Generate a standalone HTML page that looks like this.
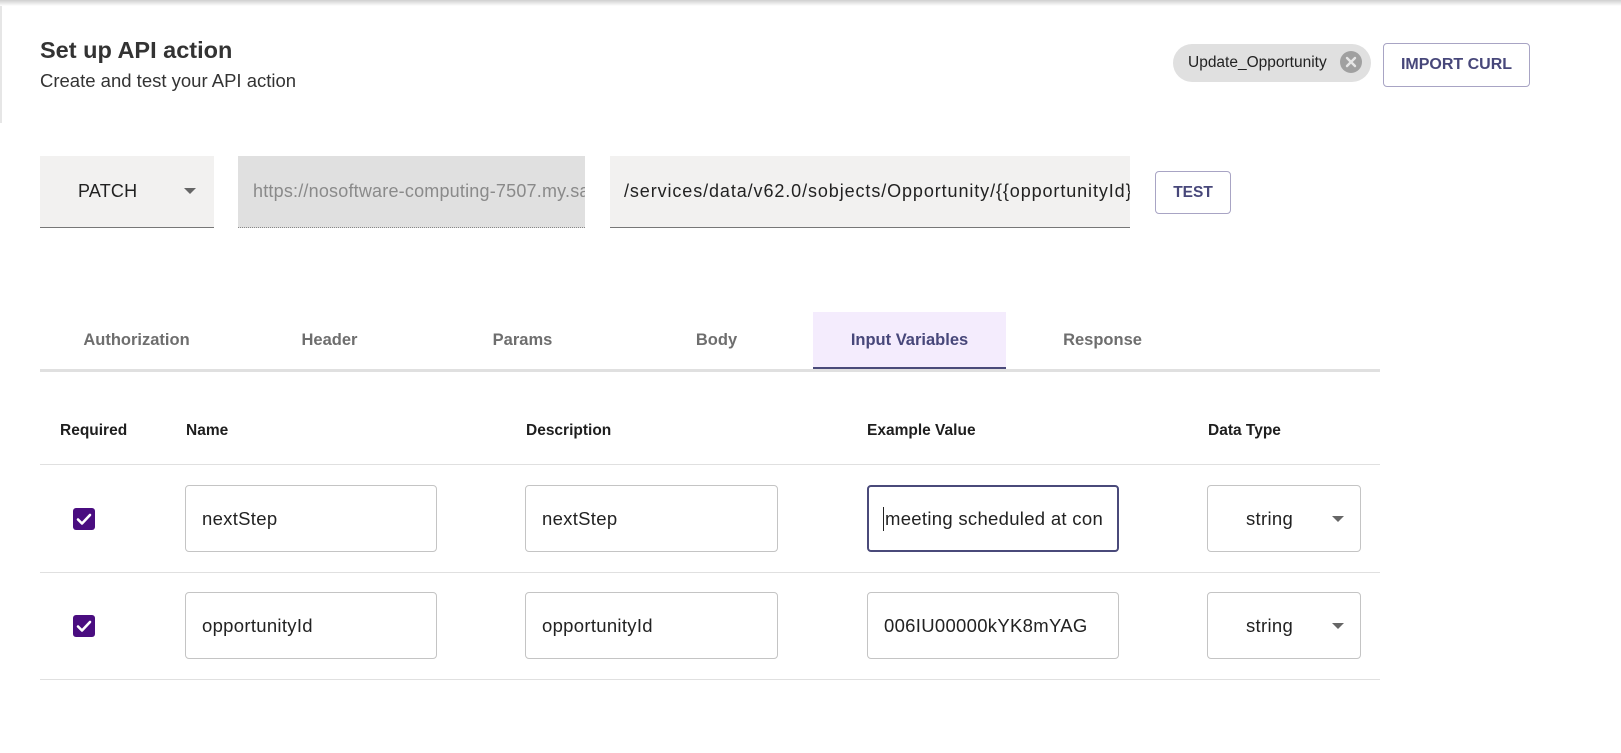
<!DOCTYPE html>
<html><head><meta charset="utf-8"><style>
*{box-sizing:border-box;margin:0;padding:0}
body{width:1621px;height:753px;background:#fff;font-family:"Liberation Sans",sans-serif;position:relative;overflow:hidden;color:#222}
.a{position:absolute}
.topsh{left:0;top:0;width:1621px;height:6px;background:linear-gradient(#cfcfcf,#fff)}
.lft{left:0;top:6px;width:2px;height:117px;background:#e6e6e6}
.t{white-space:nowrap;overflow:hidden}
.btn{border:1px solid #a8a4c4;border-radius:4px;color:#47477a;font-weight:bold;display:flex;align-items:center;justify-content:center;background:#fff}
.fld{display:flex;align-items:center;white-space:nowrap;overflow:hidden;font-size:18px;letter-spacing:0.2px}
.tab{top:312px;height:57px;width:193px;display:flex;align-items:center;justify-content:center;font-size:16.5px;color:#6e6e6e;font-weight:bold}
.th{top:422px;font-size:15.5px;font-weight:bold;color:#1e1e1e}
.hr{left:40px;width:1340px;height:1px;background:#e0e0e0}
.in{border:1px solid #c4c4c4;border-radius:4px;height:67px;display:flex;align-items:center;padding-left:16px;font-size:18.5px;letter-spacing:0.3px;color:#222;white-space:nowrap;overflow:hidden}
.cb{width:22px;height:22px;border-radius:3px;background:#4a0d80}
.arr{width:0;height:0;border-left:6px solid transparent;border-right:6px solid transparent;border-top:6px solid #666}
</style></head><body>
<div class="a topsh"></div><div class="a lft"></div>
<div class="a t" style="left:40px;top:37px;font-size:23.5px;font-weight:bold;color:#333">Set up API action</div>
<div class="a t" style="left:40px;top:70px;font-size:18.5px;color:#333">Create and test your API action</div>

<div class="a" style="left:1173px;top:44px;width:198px;height:38px;border-radius:19px;background:#e0e0e0;display:flex;align-items:center;padding-left:15px;font-size:15.5px;color:#222">Update_Opportunity</div>
<div class="a" style="left:1340px;top:51px;width:22px;height:22px;border-radius:50%;background:#a0a0a0">
<svg width="22" height="22" viewBox="0 0 22 22"><path d="M7 7L15 15M15 7L7 15" stroke="#e6e6e6" stroke-width="2.4" stroke-linecap="round"/></svg></div>
<div class="a btn" style="left:1383px;top:43px;width:147px;height:44px;font-size:16px">IMPORT CURL</div>

<div class="a fld" style="left:40px;top:156px;width:174px;height:72px;background:#f2f1f0;border-bottom:1px solid #777;padding-left:38px;color:#222">PATCH</div>
<div class="a arr" style="left:184px;top:188px"></div>
<div class="a fld" style="left:238px;top:156px;width:347px;height:72px;background:#e0e0e0;border-bottom:1px dotted #888;padding-left:15px;color:#8a8a8a">https://nosoftware-computing-7507.my.salesforce.com</div>
<div class="a fld" style="left:610px;top:156px;width:520px;height:72px;background:#f2f1f0;border-bottom:1px solid #777;padding-left:14px;color:#222;letter-spacing:0.9px">/services/data/v62.0/sobjects/Opportunity/{{opportunityId}}</div>
<div class="a btn" style="left:1155px;top:171px;width:76px;height:43px;font-size:15.5px">TEST</div>

<div class="a tab" style="left:40px">Authorization</div>
<div class="a tab" style="left:233px">Header</div>
<div class="a tab" style="left:426px">Params</div>
<div class="a tab" style="left:620px">Body</div>
<div class="a tab" style="left:813px;background:#f4ecfd;color:#47477a">Input Variables</div>
<div class="a tab" style="left:1006px">Response</div>
<div class="a" style="left:40px;top:369px;width:1340px;height:3px;background:#e0e0e0"></div>
<div class="a" style="left:813px;top:367px;width:193px;height:2px;background:#4a4a7a"></div>

<div class="a th" style="left:60px">Required</div>
<div class="a th" style="left:186px">Name</div>
<div class="a th" style="left:526px">Description</div>
<div class="a th" style="left:867px">Example Value</div>
<div class="a th" style="left:1208px">Data Type</div>
<div class="a hr" style="top:464px"></div>

<div class="a cb" style="left:73px;top:508px"><svg width="22" height="22" viewBox="0 0 22 22"><path d="M5 11.5L9 15.5L17 7" stroke="#fff" stroke-width="2.6" fill="none" stroke-linecap="round" stroke-linejoin="round"/></svg></div>
<div class="a in" style="left:185px;top:485px;width:252px">nextStep</div>
<div class="a in" style="left:525px;top:485px;width:253px">nextStep</div>
<div class="a in" style="left:867px;top:485px;width:252px;border:2px solid #4a4a7a;padding-left:14px"><span style="display:inline-block;width:1px;height:24px;background:#222;margin-right:1px"></span>meeting scheduled at con</div>
<div class="a in" style="left:1207px;top:485px;width:154px;padding-left:38px">string</div>
<div class="a arr" style="left:1332px;top:516px"></div>
<div class="a hr" style="top:572px"></div>

<div class="a cb" style="left:73px;top:615px"><svg width="22" height="22" viewBox="0 0 22 22"><path d="M5 11.5L9 15.5L17 7" stroke="#fff" stroke-width="2.6" fill="none" stroke-linecap="round" stroke-linejoin="round"/></svg></div>
<div class="a in" style="left:185px;top:592px;width:252px">opportunityId</div>
<div class="a in" style="left:525px;top:592px;width:253px">opportunityId</div>
<div class="a in" style="left:867px;top:592px;width:252px">006IU00000kYK8mYAG</div>
<div class="a in" style="left:1207px;top:592px;width:154px;padding-left:38px">string</div>
<div class="a arr" style="left:1332px;top:623px"></div>
<div class="a hr" style="top:679px"></div>
</body></html>
